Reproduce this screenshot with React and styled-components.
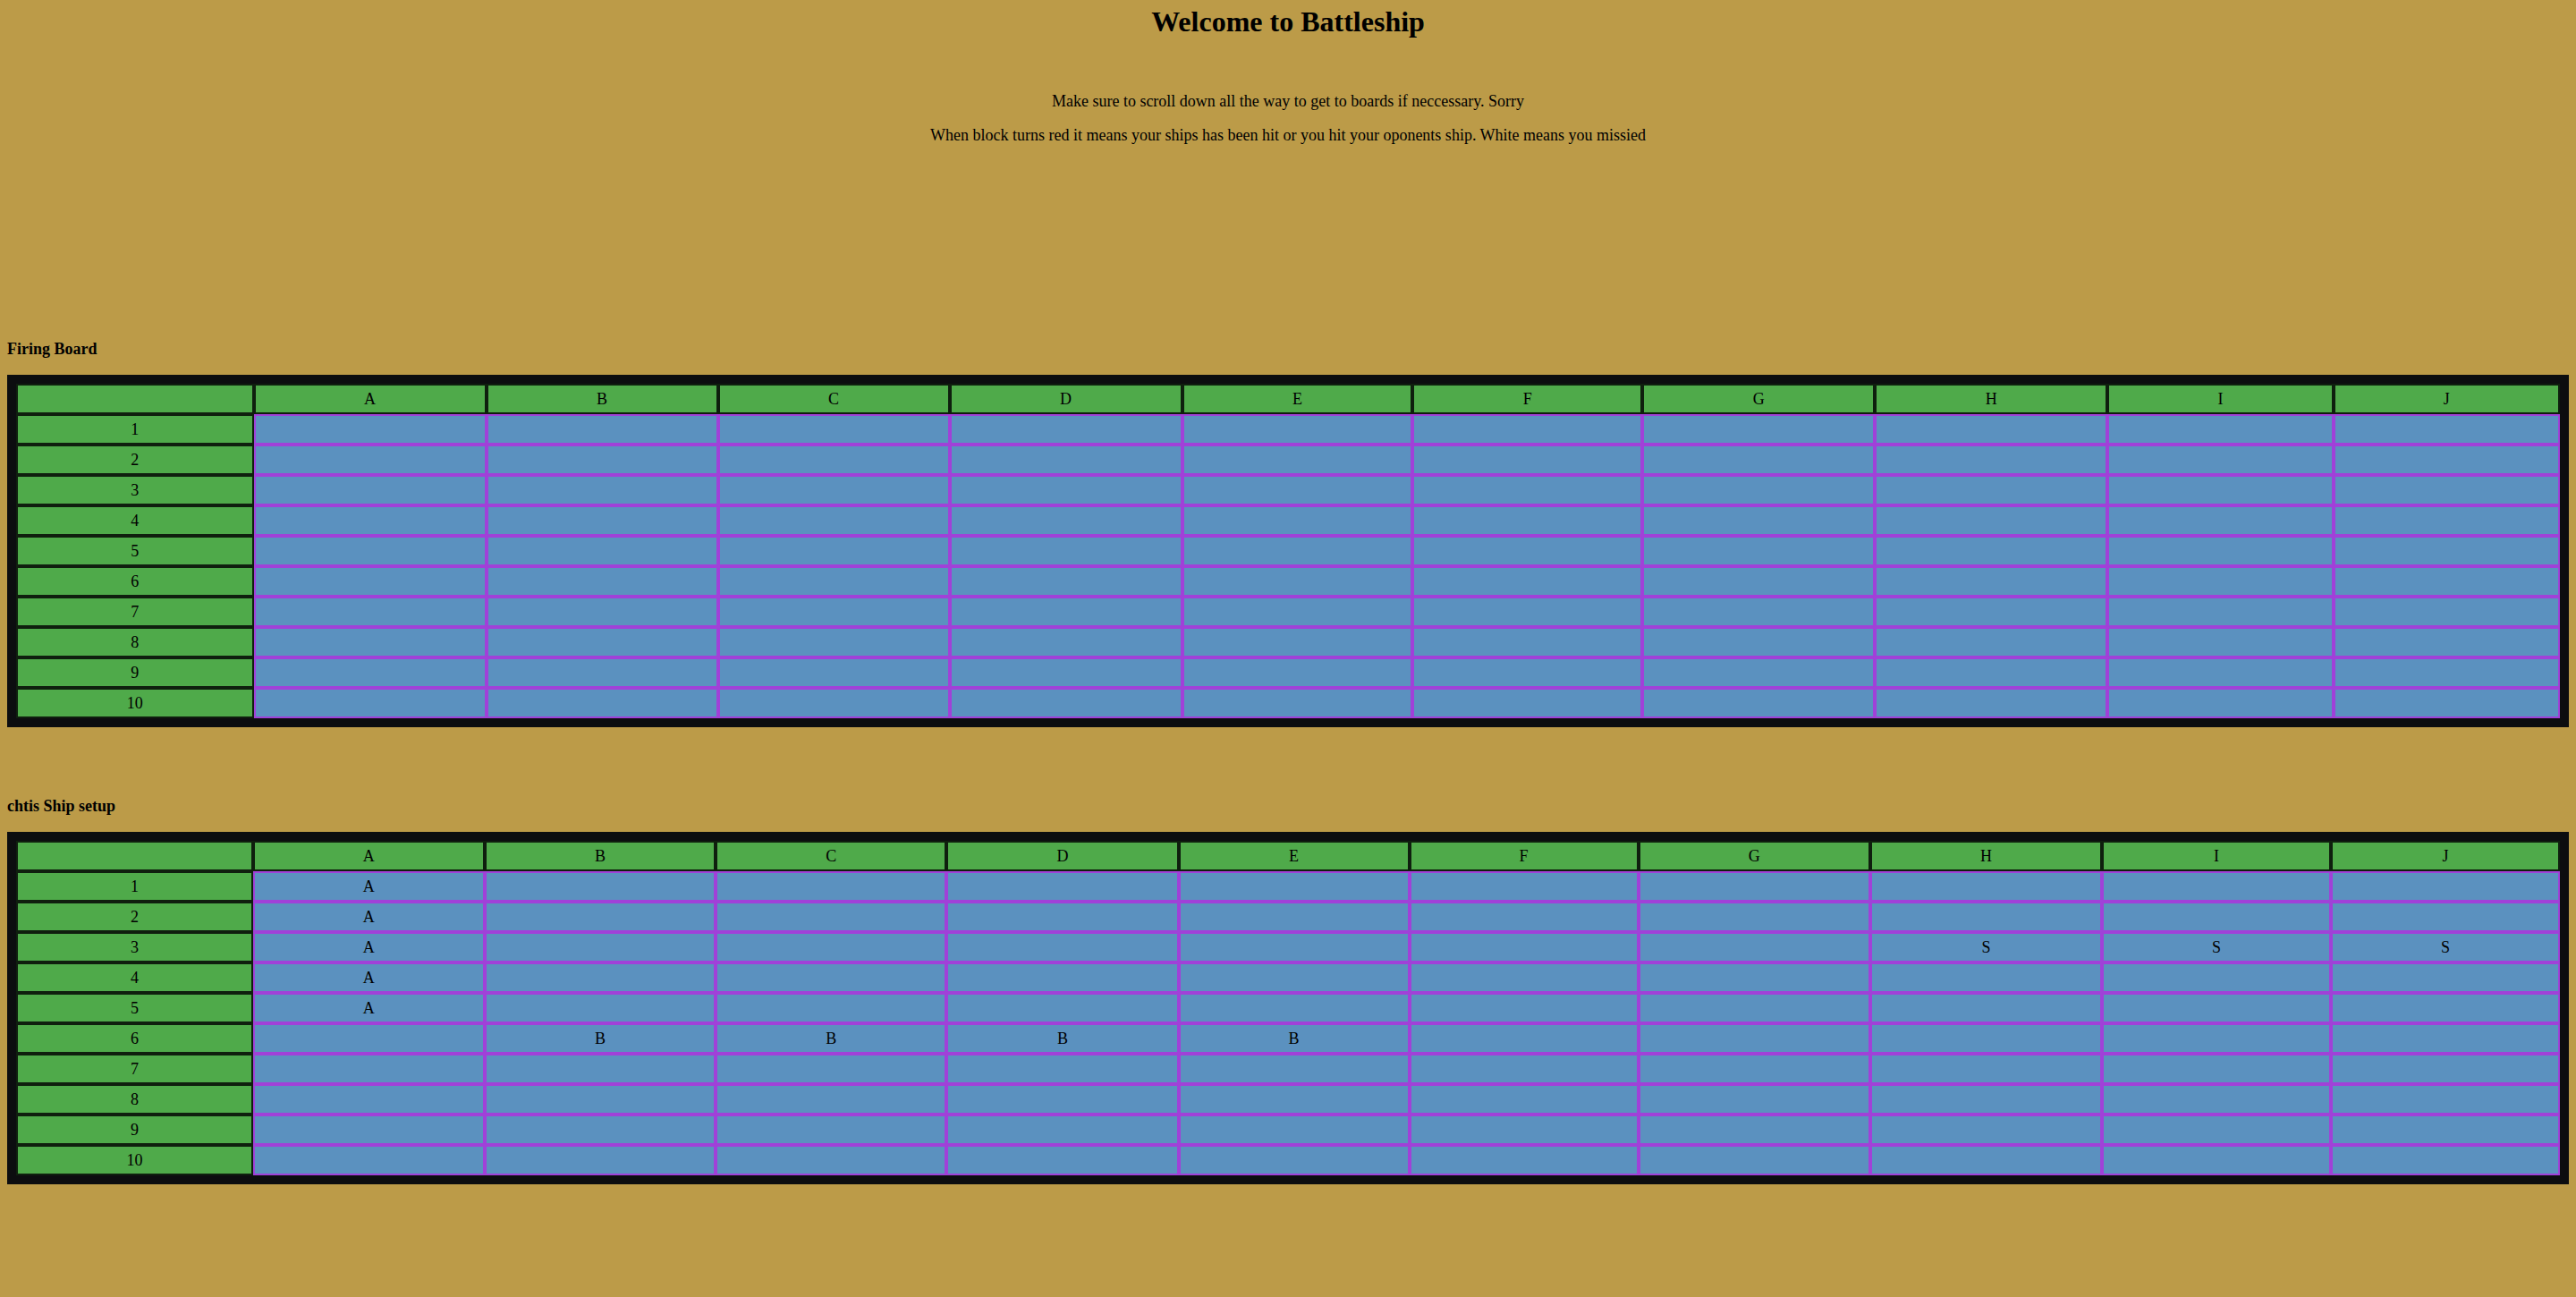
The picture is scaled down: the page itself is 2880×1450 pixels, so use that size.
import React from "react";
import styled, { createGlobalStyle } from "styled-components";

const GlobalStyle = createGlobalStyle`
  html, body {
    background: #bc9b48;
    min-height: 100%;
  }
  body {
    margin: 0;
    font-family: "Liberation Serif", "Times New Roman", serif;
    color: #000;
  }
`;

const Page = styled.div`
  padding: 6px 8px 40px;
`;

const Title = styled.h1`
  margin: 0;
  font-size: 32px;
  line-height: 37px;
  font-weight: bold;
  text-align: center;
`;

const Notes = styled.div`
  margin-top: 60px;
  display: flex;
  flex-direction: column;
  gap: 18px;
`;

const Note = styled.p`
  margin: 0;
  font-size: 18px;
  line-height: 20px;
  text-align: center;
`;

const Boards = styled.div`
  margin-top: 219px;
  display: flex;
  flex-direction: column;
  gap: 78px;
`;

const Section = styled.section`
  display: flex;
  flex-direction: column;
`;

const BoardTitle = styled.h3`
  margin: 0 0 18px;
  font-size: 18px;
  line-height: 21px;
  font-weight: bold;
`;

const Grid = styled.table`
  width: 100%;
  border: 10px solid #0c0d0f;
  border-spacing: 0;
  background: #0c0d0f;
`;

const Cell = styled.td`
  padding: 6px 109px;
  font-size: 18px;
  line-height: 18px;
  font-weight: normal;
  text-align: center;
  vertical-align: middle;
  background: ${(p) => (p.$water ? "#5b91bf" : "#4faa4a")};
  border: 2px solid ${(p) => (p.$water ? "#a041d8" : "#0f1f0e")};
`;

const COLS = ["A", "B", "C", "D", "E", "F", "G", "H", "I", "J"];
const ROWS = [1, 2, 3, 4, 5, 6, 7, 8, 9, 10];

function Board({ title, ships = {} }) {
  return (
    <Section>
      <BoardTitle>{title}</BoardTitle>
      <Grid>
        <tbody>
          <tr>
            <Cell as="th" />
            {COLS.map((c) => (
              <Cell as="th" key={c}>
                {c}
              </Cell>
            ))}
          </tr>
          {ROWS.map((r) => (
            <tr key={r}>
              <Cell>{r}</Cell>
              {COLS.map((c) => (
                <Cell $water key={c}>
                  {ships[`${c}${r}`] || ""}
                </Cell>
              ))}
            </tr>
          ))}
        </tbody>
      </Grid>
    </Section>
  );
}

const shipSetup = {
  A1: "A",
  A2: "A",
  A3: "A",
  A4: "A",
  A5: "A",
  H3: "S",
  I3: "S",
  J3: "S",
  B6: "B",
  C6: "B",
  D6: "B",
  E6: "B",
};

export default function App() {
  return (
    <>
      <GlobalStyle />
      <Page>
        <Title>Welcome to Battleship</Title>
        <Notes>
          <Note>Make sure to scroll down all the way to get to boards if neccessary. Sorry</Note>
          <Note>
            When block turns red it means your ships has been hit or you hit your oponents ship. White means you missied
          </Note>
        </Notes>
        <Boards>
          <Board title="Firing Board" />
          <Board title="chtis Ship setup" ships={shipSetup} />
        </Boards>
      </Page>
    </>
  );
}
